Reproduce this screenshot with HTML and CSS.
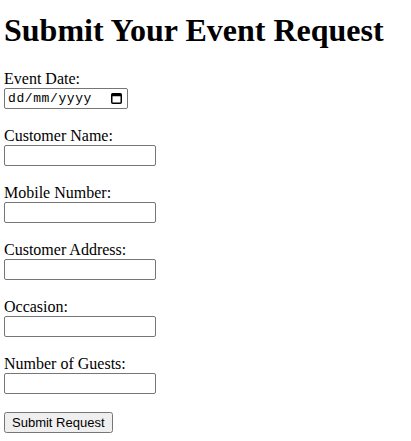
FILE: index.html
```html
<!DOCTYPE html>
<html>
<head>
<meta charset="utf-8">
<link rel="stylesheet" href="styles.css">
</head>
<body>
<h1 class="title">Submit Your Event Request</h1>
<form class="form">
<label for="d">Event Date:</label><br>
<span class="date-field" id="d" role="textbox" aria-label="Event Date"><span class="date-text">dd/mm/yyyy</span><svg class="cal" width="11" height="11" viewBox="0 0 11 11"><rect x="0.75" y="0.75" width="9.5" height="9.5" rx="1" fill="none" stroke="#000" stroke-width="1.5"/><rect x="0.75" y="0.75" width="9.5" height="2.5" fill="#000"/></svg></span><br><br>
<label for="n">Customer Name:</label><br>
<input type="text" id="n" class="field"><br><br>
<label for="m">Mobile Number:</label><br>
<input type="text" id="m" class="field"><br><br>
<label for="a">Customer Address:</label><br>
<input type="text" id="a" class="field"><br><br>
<label for="o">Occasion:</label><br>
<input type="text" id="o" class="field"><br><br>
<label for="g">Number of Guests:</label><br>
<input type="text" id="g" class="field"><br><br>
<button type="submit" class="submit">Submit Request</button>
</form>
</body>
</html>
```
FILE: styles.css
```css
body {
  margin: 4px;
  font-family: "Liberation Serif", "Times New Roman", serif;
  font-size: 16px;
  color: #000;
  background: #fff;
}
.title {
  font-size: 32px;
  font-weight: bold;
  margin: 8px 0 21px;
}
.field {
  box-sizing: border-box;
  width: 152px;
  height: 21px;
  border: 1px solid #767676;
  border-radius: 2px;
  padding: 1px 2px;
  font-family: "Liberation Mono", monospace;
  font-size: 13px;
}
.date-field {
  box-sizing: border-box;
  display: inline-flex;
  align-items: center;
  justify-content: space-between;
  width: 124px;
  height: 21px;
  border: 1px solid #767676;
  border-radius: 2px;
  padding: 0 5px 0 3px;
  vertical-align: bottom;
}
.date-text {
  font-family: "Liberation Mono", monospace;
  font-size: 13px;
  letter-spacing: 0.6px;
  color: #000;
}
.cal {
  display: block;
}
.submit {
  font-family: "Liberation Sans", Arial, sans-serif;
  font-size: 13px;
}
```
